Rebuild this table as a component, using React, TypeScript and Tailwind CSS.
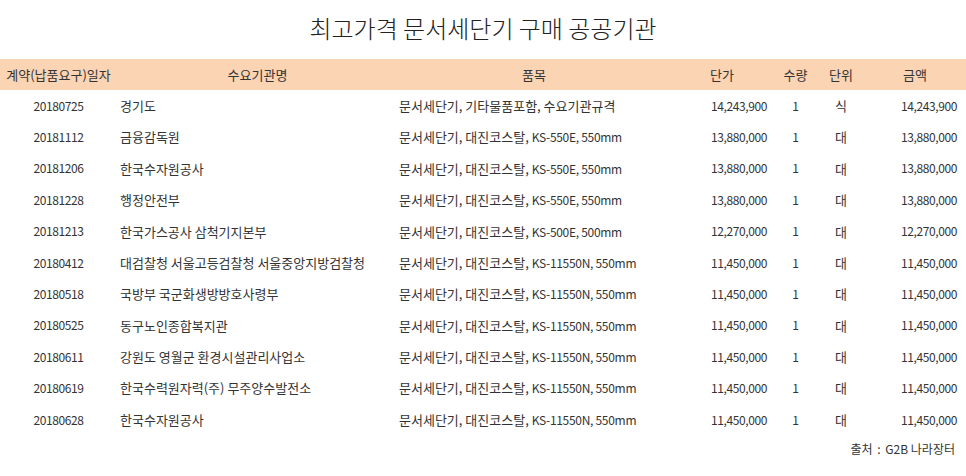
import React from "react";

const rows: [string, string, string, string, string, string, string][] = [
  ["20180725", "경기도", "문서세단기, 기타물품포함, 수요기관규격", "14,243,900", "1", "식", "14,243,900"],
  ["20181112", "금융감독원", "문서세단기, 대진코스탈, KS-550E, 550mm", "13,880,000", "1", "대", "13,880,000"],
  ["20181206", "한국수자원공사", "문서세단기, 대진코스탈, KS-550E, 550mm", "13,880,000", "1", "대", "13,880,000"],
  ["20181228", "행정안전부", "문서세단기, 대진코스탈, KS-550E, 550mm", "13,880,000", "1", "대", "13,880,000"],
  ["20181213", "한국가스공사 삼척기지본부", "문서세단기, 대진코스탈, KS-500E, 500mm", "12,270,000", "1", "대", "12,270,000"],
  ["20180412", "대검찰청 서울고등검찰청 서울중앙지방검찰청", "문서세단기, 대진코스탈, KS-11550N, 550mm", "11,450,000", "1", "대", "11,450,000"],
  ["20180518", "국방부 국군화생방방호사령부", "문서세단기, 대진코스탈, KS-11550N, 550mm", "11,450,000", "1", "대", "11,450,000"],
  ["20180525", "동구노인종합복지관", "문서세단기, 대진코스탈, KS-11550N, 550mm", "11,450,000", "1", "대", "11,450,000"],
  ["20180611", "강원도 영월군 환경시설관리사업소", "문서세단기, 대진코스탈, KS-11550N, 550mm", "11,450,000", "1", "대", "11,450,000"],
  ["20180619", "한국수력원자력(주) 무주양수발전소", "문서세단기, 대진코스탈, KS-11550N, 550mm", "11,450,000", "1", "대", "11,450,000"],
  ["20180628", "한국수자원공사", "문서세단기, 대진코스탈, KS-11550N, 550mm", "11,450,000", "1", "대", "11,450,000"],
];

const grid = "grid grid-cols-[117px_281px_272px_105px_41px_50px_100px] items-center";

function Item({ text }: { text: string }) {
  const i = text.indexOf("KS");
  if (i < 0) return <>{text}</>;
  return (
    <>
      {text.slice(0, i)}
      <span className="text-[12px] tracking-[-0.3px]">{text.slice(i)}</span>
    </>
  );
}

export default function App() {
  return (
    <div
      className="w-[966px] h-[476px] bg-white text-[#333333] overflow-hidden"
      style={{ fontFamily: '"Noto Sans CJK KR", "Noto Sans", sans-serif' }}
    >
      <div className="pt-[12px] h-[59px] text-center text-[24px] leading-[32px] font-light text-[#222222]">
        최고가격 문서세단기 구매 공공기관
      </div>
      <div className={`${grid} h-[31px] bg-[#fbd4b4] text-[13px]`}>
        <div className="text-center">계약(납품요구)일자</div>
        <div className="text-center">수요기관명</div>
        <div className="text-center">품목</div>
        <div className="pl-[40px]">단가</div>
        <div className="text-center">수량</div>
        <div className="text-center">단위</div>
        <div className="pl-[37px]">금액</div>
      </div>
      <div className="text-[13px]">
        {rows.map((r, i) => (
          <div key={i} className={`${grid} h-[31.4px]`}>
            <div className="text-center text-[12px] tracking-[-0.4px]">{r[0]}</div>
            <div className="pl-[3px] whitespace-nowrap">{r[1]}</div>
            <div className="pl-[1px] whitespace-nowrap">
              <Item text={r[2]} />
            </div>
            <div className="pl-[41px] text-[12px] tracking-[-0.4px]">{r[3]}</div>
            <div className="text-center text-[12px]">{r[4]}</div>
            <div className="text-center">{r[5]}</div>
            <div className="text-right pr-[9px] text-[12px] tracking-[-0.4px]">{r[6]}</div>
          </div>
        ))}
      </div>
      <div className="mt-[6px] text-right pr-[11px] text-[12px] leading-[16px]">
        출처 <span className="px-[2px]">:</span> G2B 나라장터
      </div>
    </div>
  );
}
